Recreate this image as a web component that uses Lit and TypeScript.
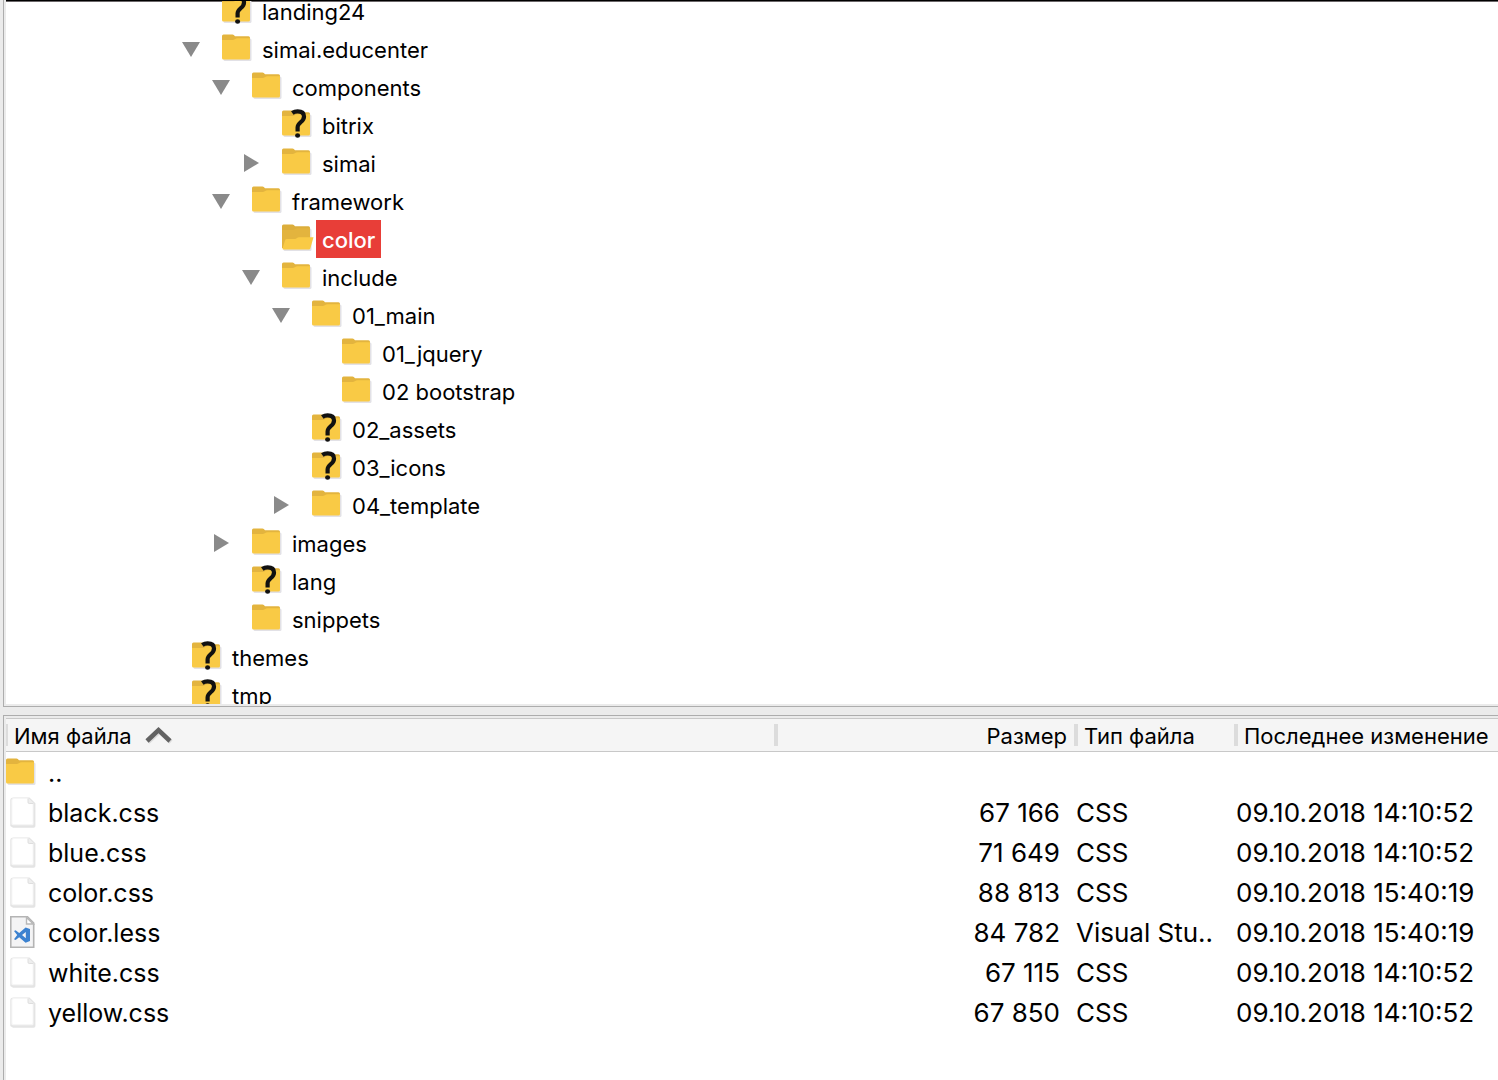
import { LitElement, html, css, svg, nothing } from "lit";
import { customElement, state } from "lit/decorators.js";
import { classMap } from "lit/directives/class-map.js";

interface TreeNode {
  name: string;
  icon?: "unknown" | "open";
  open?: boolean;
  children?: TreeNode[];
}

interface FileRow {
  name: string;
  icon: "folder" | "file" | "code";
  size: string;
  type: string;
  modified: string;
}

const tree: TreeNode[] = [
  {
    name: "templates",
    open: true,
    children: [
      { name: "landing24", icon: "unknown" },
      {
        name: "simai.educenter",
        open: true,
        children: [
          {
            name: "components",
            open: true,
            children: [
              { name: "bitrix", icon: "unknown" },
              { name: "simai", children: [] },
            ],
          },
          {
            name: "framework",
            open: true,
            children: [
              { name: "color", icon: "open" },
              {
                name: "include",
                open: true,
                children: [
                  {
                    name: "01_main",
                    open: true,
                    children: [{ name: "01_jquery" }, { name: "02 bootstrap" }],
                  },
                  { name: "02_assets", icon: "unknown" },
                  { name: "03_icons", icon: "unknown" },
                  { name: "04_template", children: [] },
                ],
              },
            ],
          },
          { name: "images", children: [] },
          { name: "lang", icon: "unknown" },
          { name: "snippets" },
        ],
      },
    ],
  },
  { name: "themes", icon: "unknown" },
  { name: "tmp", icon: "unknown" },
];

const files: FileRow[] = [
  { name: "..", icon: "folder", size: "", type: "", modified: "" },
  { name: "black.css", icon: "file", size: "67 166", type: "CSS", modified: "09.10.2018 14:10:52" },
  { name: "blue.css", icon: "file", size: "71 649", type: "CSS", modified: "09.10.2018 14:10:52" },
  { name: "color.css", icon: "file", size: "88 813", type: "CSS", modified: "09.10.2018 15:40:19" },
  { name: "color.less", icon: "code", size: "84 782", type: "Visual Stu..", modified: "09.10.2018 15:40:19" },
  { name: "white.css", icon: "file", size: "67 115", type: "CSS", modified: "09.10.2018 14:10:52" },
  { name: "yellow.css", icon: "file", size: "67 850", type: "CSS", modified: "09.10.2018 14:10:52" },
];

const closedFolder = svg`
  <path d="M1.5 8.5H28Q29.5 8.5 29.5 10V29.5Q29.5 31 28 31H3Q1.5 31 1.5 29.5Z" fill="#e2e1e6"/>
  <path d="M0 6Q0 4.5 1.5 4.5H10.5Q12 4.5 13 6.3H26.5Q28 6.3 28 7.8V14H0Z" fill="#e3b43e"/>
  <path d="M0 10H10.5Q12 10 13.2 9Q14 8.2 15.5 8.2H28V28Q28 29.5 26.5 29.5H1.5Q0 29.5 0 28Z" fill="#f9ca45"/>`;

const openFolder = svg`
  <path d="M1.5 8.5H28Q29.5 8.5 29.5 10V29.5Q29.5 31 28 31H3Q1.5 31 1.5 29.5Z" fill="#e2e1e6"/>
  <path d="M0 6Q0 4.5 1.5 4.5H10.5Q12 4.5 13 6.3H26.5Q28 6.3 28 7.8V28H0Z" fill="#dcae3c"/>
  <path d="M0 10H10.5Q12 10 13.2 9Q14 8.2 15.5 8.2H28V28H0Z" fill="#e3b43e"/>
  <path d="M3.2 19.9Q3.5 18.9 4.7 18.9H13Q14 18.9 15 18Q16 17.2 17 17.2H31.5L28.3 28.5Q28 29.5 27 29.5H1.5Q.3 29.5 .5 28.5Z" fill="#f9ca45"/>`;

const questionBadge = svg`
  <path d="M10.3 7Q12.6 5.3 15.6 5.3Q22 5.3 22 10.4Q22 13.4 18.9 16Q15.6 18.8 15.6 21.6V25.4" fill="none" stroke="#111" stroke-width="4.2"/>
  <ellipse cx="15.6" cy="29.5" rx="2.5" ry="2.2" fill="#111"/>`;

const blankFile = svg`
  <path d="M7.5 4.4H23.5L29.4 10.3V33Q29.4 34.8 27.6 34.8H7L4.3 33V7Q4.3 4.4 7.5 4.4Z" fill="#e4e4e4"/>
  <path d="M7.5 5H22L27.5 10.5V31Q27.5 32.2 26.3 32.2H6.8Q5.3 32.2 5.3 30.8V7Q5.3 5 7.5 5Z" fill="#f6f6f6"/>
  <path d="M8 6H21.5L26.5 11V30Q26.5 31 25.5 31H7.5Q6.5 31 6.5 30V7.5Q6.5 6 8 6Z" fill="#fff"/>
  <path d="M22 5.5V9.3Q22 10.5 23.2 10.5H27.3" fill="#eee" stroke="#dedede" stroke-width="1"/>`;

const codeFile = svg`
  <path d="M4.8 3.8H21.5L27.7 10V34.2H4.8Z" fill="#f4f4f5" stroke="#b4b4b4" stroke-width="1.6"/>
  <path d="M20.5 4.5V11H27.3Z" fill="#fff" stroke="#b8b8b8" stroke-width="1.4"/>
  <path d="M19.6 14.4L24 16V28L19.6 29.8L13.2 24.3L9.6 27L8 26.2L11.2 22.1L8 18L9.6 17.2L13.2 19.9ZM19.8 18.9L16 22.1L19.8 25.3Z" fill="#3c82d0"/>`;

@customElement("app-root")
export class AppRoot extends LitElement {
  @state() private collapsed = new Set<string>();
  @state() private selected = "color";
  @state() private ascending = true;

  static styles = css`
    :host {
      display: block;
      height: 100vh;
      overflow: hidden;
      color: #000;
      font-family: Inter, "Noto Sans", sans-serif;
      font-size: 22px;
    }
    * {
      box-sizing: border-box;
    }
    button {
      padding: 0;
      border: 0;
      background: none;
      color: inherit;
      font: inherit;
      white-space: pre;
    }
    ul {
      margin: 0;
      padding: 0;
      list-style: none;
    }
    .window {
      display: grid;
      grid-template-rows: minmax(0, 707fr) 8px minmax(0, 365fr);
      height: 100%;
      padding-left: 3px;
      background: #ebebeb;
    }
    .pane {
      display: flex;
      flex-direction: column;
      min-width: 0;
      padding-left: 2px;
      border-left: 1px solid #adadad;
      overflow: hidden;
    }
    .folders {
      padding-bottom: 2px;
      border-bottom: 1px solid #adadad;
    }
    .files {
      padding-top: 2px;
      border-top: 1px solid #adadad;
    }
    .tree {
      flex: 1;
      display: flex;
      flex-direction: column;
      min-height: 0;
      overflow: hidden;
      border-top: 1px solid #000;
      box-shadow: inset 0 1px #6b6769;
      background: #fff;
    }
    .scrolled {
      margin-top: -47px;
      padding-left: 140px;
    }
    .branch {
      padding-left: 30px;
    }
    .row {
      display: flex;
      align-items: center;
      height: 38px;
    }
    .toggle {
      display: grid;
      place-items: center;
      width: 30px;
      height: 38px;
      margin-right: 16px;
    }
    .toggle svg {
      display: block;
    }
    .icon {
      display: block;
      flex: none;
      width: 34px;
      height: 38px;
    }
    .label {
      height: 38px;
      padding: 2px 6px 0;
      line-height: 36px;
    }
    .selected {
      background: #e83e38;
      color: #fff;
      font-weight: 500;
    }
    .listing {
      flex: 1;
      border-top: 1px solid #c8c8c8;
      background: #fff;
      overflow: hidden;
    }
    table {
      width: 100%;
      border-spacing: 0;
      table-layout: fixed;
    }
    th {
      height: 33px;
      padding: 2px 0 0 8px;
      border-bottom: 1px solid #c8c8c8;
      background:
        linear-gradient(#dcdcdc, #dcdcdc) left 5px / 2px 22px no-repeat,
        linear-gradient(#dcdcdc, #dcdcdc) right 5px / 2px 22px no-repeat,
        #f5f5f5;
      font-weight: 400;
      line-height: 30px;
      text-align: left;
      white-space: nowrap;
    }
    th:last-child {
      background: linear-gradient(#dcdcdc, #dcdcdc) left 5px / 2px 22px no-repeat, #f5f5f5;
    }
    .sort {
      display: flex;
      align-items: center;
      gap: 13px;
    }
    .descending svg {
      transform: rotate(180deg);
    }
    .col-size {
      width: 300px;
    }
    .col-type {
      width: 160px;
    }
    .col-date {
      width: 262px;
    }
    th.col-size {
      padding-right: 9px;
      text-align: right;
    }
    td {
      height: 40px;
      padding: 0;
      font-size: 26px;
      line-height: 40px;
      white-space: nowrap;
    }
    td.col-size {
      padding-right: 16px;
      text-align: right;
    }
    tbody::before {
      content: "";
      display: block;
      height: 1px;
    }
    .file {
      display: flex;
      align-items: center;
      gap: 6px;
      font-size: 25px;
    }
    .file-icon {
      flex: none;
      width: 36px;
      height: 40px;
    }
  `;

  private toggle(name: string) {
    const next = new Set(this.collapsed);
    if (next.has(name)) next.delete(name);
    else next.add(name);
    this.collapsed = next;
  }

  private renderNode(node: TreeNode): unknown {
    const open = !!node.open && !this.collapsed.has(node.name);
    return html`
      <li>
        <div class="row">
          ${node.children
            ? html`<button class="toggle" aria-label=${node.name} aria-expanded=${open} @click=${() => this.toggle(node.name)}>
                <svg width="20" height="20" aria-hidden="true">
                  <path d=${open ? "M1 3H19L10 18Z" : "M3 1L18 10L3 19Z"} fill="#8a8a8a" />
                </svg>
              </button>`
            : html`<span class="toggle"></span>`}
          <svg class="icon" viewBox="0 0 34 38" aria-hidden="true">
            ${node.icon === "open" ? openFolder : closedFolder} ${node.icon === "unknown" ? questionBadge : nothing}
          </svg>
          <button
            class=${classMap({ label: true, selected: this.selected === node.name })}
            @click=${() => (this.selected = node.name)}
          >${node.name}</button>
        </div>
        ${open ? html`<ul class="branch">${node.children!.map((child) => this.renderNode(child))}</ul>` : nothing}
      </li>
    `;
  }

  private renderFile(file: FileRow) {
    const icon = file.icon === "file" ? blankFile : file.icon === "code" ? codeFile : svg`<g transform="translate(0 1)">${closedFolder}</g>`;
    return html`
      <tr>
        <td>
          <div class="file">
            <svg class="file-icon" viewBox="0 0 36 40" aria-hidden="true">${icon}</svg>
            <span>${file.name}</span>
          </div>
        </td>
        <td class="col-size">${file.size}</td>
        <td>${file.type}</td>
        <td>${file.modified}</td>
      </tr>
    `;
  }

  render() {
    const rows = this.ascending ? files : [files[0], ...files.slice(1).reverse()];
    return html`
      <main class="window">
        <section class="pane folders">
          <div class="tree">
            <ul class="scrolled">
              ${tree.map((node) => this.renderNode(node))}
            </ul>
          </div>
        </section>
        <div></div>
        <section class="pane files">
          <div class="listing">
            <table>
              <thead>
                <tr>
                  <th>
                    <button
                      class=${classMap({ sort: true, descending: !this.ascending })}
                      @click=${() => (this.ascending = !this.ascending)}
                    ><span>Имя файла</span><svg width="28" height="20" viewBox="0 0 28 20" aria-hidden="true">
                        <path d="M3 16L14.5 5.5L26 16" fill="none" stroke="#dcdcdc" stroke-width="4.5" />
                        <path d="M2 15L13.5 4L25 15" fill="none" stroke="#636363" stroke-width="4.5" />
                      </svg></button>
                  </th>
                  <th class="col-size">Размер</th>
                  <th class="col-type">Тип файла</th>
                  <th class="col-date">Последнее изменение</th>
                </tr>
              </thead>
              <tbody>
                ${rows.map((file) => this.renderFile(file))}
              </tbody>
            </table>
          </div>
        </section>
      </main>
    `;
  }
}
